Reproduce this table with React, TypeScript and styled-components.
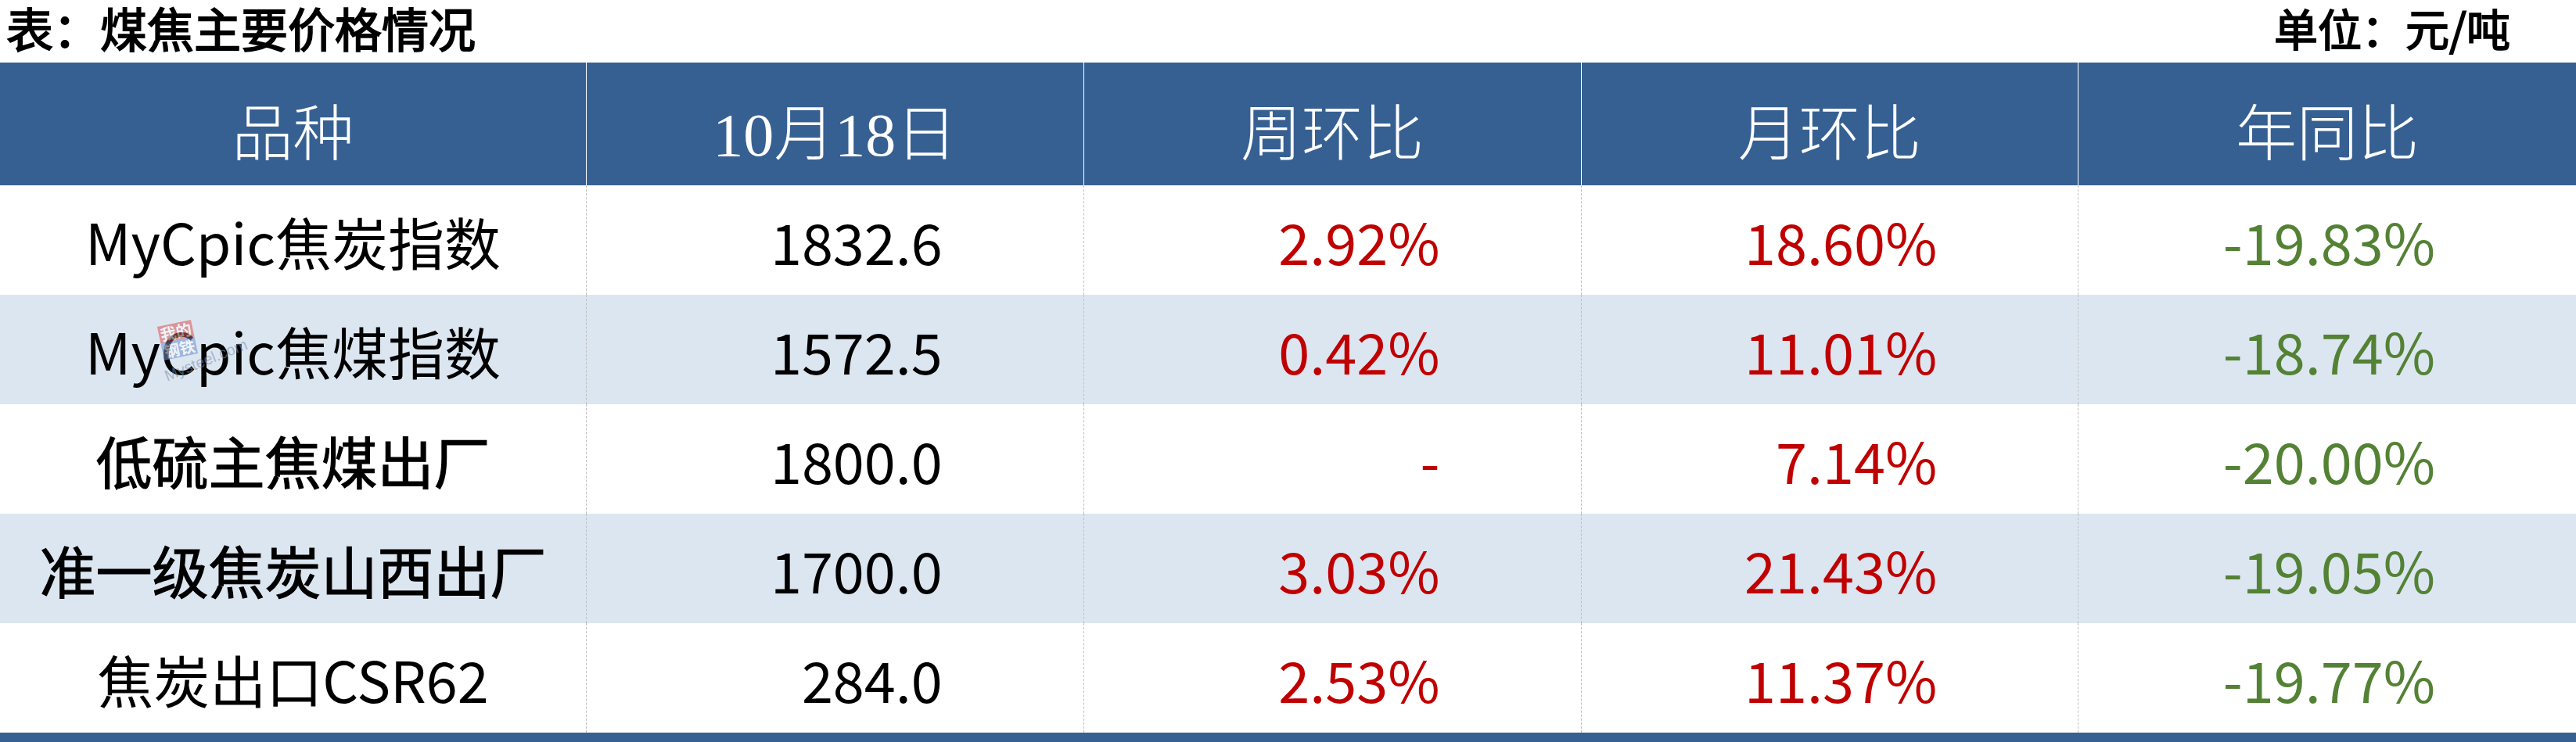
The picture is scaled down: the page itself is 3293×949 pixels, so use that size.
import React from 'react';
import styled, { createGlobalStyle } from 'styled-components';

const GlobalStyle = createGlobalStyle`
  html, body {
    margin: 0;
    padding: 0;
    background: #ffffff;
  }
  body {
    font-family: "Noto Sans CJK SC", "Noto Sans", sans-serif;
  }
`;

const Page = styled.div`
  width: 3293px;
  height: 949px;
  overflow: hidden;
  background: #ffffff;
`;

const TitleBar = styled.div`
  height: 80px;
  display: flex;
  justify-content: space-between;
  align-items: flex-start;
  padding: 4px 84px 0 8px;
  box-sizing: border-box;
`;

const Caption = styled.span<{ size: number }>`
  font-family: "Noto Sans CJK SC", sans-serif;
  font-weight: 400;
  -webkit-text-stroke: 1.8px #000000;
  font-size: ${props => props.size}px;
  line-height: 62px;
  color: #000000;
`;

const Table = styled.div`
  display: grid;
  grid-template-columns: 750px repeat(4, 1fr);
  grid-auto-rows: 140px;
  grid-template-rows: 157px;
`;

const HeaderCell = styled.div<{ last?: boolean }>`
  display: flex;
  align-items: center;
  justify-content: center;
  padding-top: 12px;
  background: #366092;
  color: #ffffff;
  font-family: "Liberation Serif", "Noto Sans CJK SC", serif;
  font-weight: 300;
  font-size: 78px;
  border-right: ${props => props.last ? 'none' : '1px solid #ffffff'};
`;

const Cell = styled.div<{ shade: boolean; numeric?: boolean; color?: string; heavy?: boolean; last?: boolean }>`
  position: relative;
  display: flex;
  align-items: center;
  justify-content: ${props => props.numeric ? 'flex-end' : 'center'};
  padding-right: ${props => props.numeric ? '180px' : '0'};
  background: ${props => props.shade ? '#DCE6F1' : '#ffffff'};
  color: ${props => props.color || '#000000'};
  font-family: "Noto Sans CJK SC", sans-serif;
  font-weight: 400;
  -webkit-text-stroke: ${props => props.heavy ? '1.2px #000000' : '0'};
  font-size: 72px;
  white-space: nowrap;
  border-right: ${props => props.last ? 'none' : '1px dashed #BFBFBF'};
`;

const BottomBar = styled.div`
  height: 12px;
  background: #366092;
`;

const Watermark = styled.div`
  position: absolute;
  left: 205px;
  top: 36px;
  width: 90px;
  height: 70px;
  opacity: 0.55;
  pointer-events: none;
`;

const MarkLogo = styled.div`
  width: 44px;
  font-size: 20px;
  line-height: 22px;
  font-weight: 700;
  color: #ffffff;
  text-align: center;
  transform: rotate(-12deg);
`;

const MarkTop = styled.div`
  background: #d9534f;
`;

const MarkBottom = styled.div`
  background: #6d8fcf;
`;

const MarkText = styled.div`
  position: absolute;
  left: 2px;
  top: 58px;
  font-size: 20px;
  font-family: "Liberation Sans", sans-serif;
  color: #7d8fb0;
  transform: rotate(-22deg);
  transform-origin: left top;
`;

const RED = '#C00000';
const GREEN = '#548235';

interface Row {
  name: string;
  heavy?: boolean;
  price: string;
  week: string;
  month: string;
  year: string;
}

const rows: Row[] = [
  { name: 'MyCpic焦炭指数', price: '1832.6', week: '2.92%', month: '18.60%', year: '-19.83%' },
  { name: 'MyCpic焦煤指数', price: '1572.5', week: '0.42%', month: '11.01%', year: '-18.74%' },
  { name: '低硫主焦煤出厂', heavy: true, price: '1800.0', week: '-', month: '7.14%', year: '-20.00%' },
  { name: '准一级焦炭山西出厂', heavy: true, price: '1700.0', week: '3.03%', month: '21.43%', year: '-19.05%' },
  { name: '焦炭出口CSR62', price: '284.0', week: '2.53%', month: '11.37%', year: '-19.77%' },
];

const headers = ['品种', '10月18日', '周环比', '月环比', '年同比'];

export default function App() {
  return (
    <Page>
      <GlobalStyle />
      <TitleBar>
        <Caption size={60}>表：煤焦主要价格情况</Caption>
        <Caption size={56}>单位：元/吨</Caption>
      </TitleBar>
      <Table>
        {headers.map((h, i) => (
          <HeaderCell key={h} last={i === headers.length - 1}>{h}</HeaderCell>
        ))}
        {rows.map((r, i) => {
          const shade = i % 2 === 1;
          return (
            <React.Fragment key={r.name}>
              <Cell shade={shade} heavy={r.heavy}>
                {r.name}
                {i === 1 && (
                  <Watermark>
                    <MarkLogo>
                      <MarkTop>我的</MarkTop>
                      <MarkBottom>钢铁</MarkBottom>
                    </MarkLogo>
                    <MarkText>Mysteel.com</MarkText>
                  </Watermark>
                )}
              </Cell>
              <Cell shade={shade} numeric>{r.price}</Cell>
              <Cell shade={shade} numeric color={RED}>{r.week}</Cell>
              <Cell shade={shade} numeric color={RED}>{r.month}</Cell>
              <Cell shade={shade} numeric color={GREEN} last>{r.year}</Cell>
            </React.Fragment>
          );
        })}
      </Table>
      <BottomBar />
    </Page>
  );
}
